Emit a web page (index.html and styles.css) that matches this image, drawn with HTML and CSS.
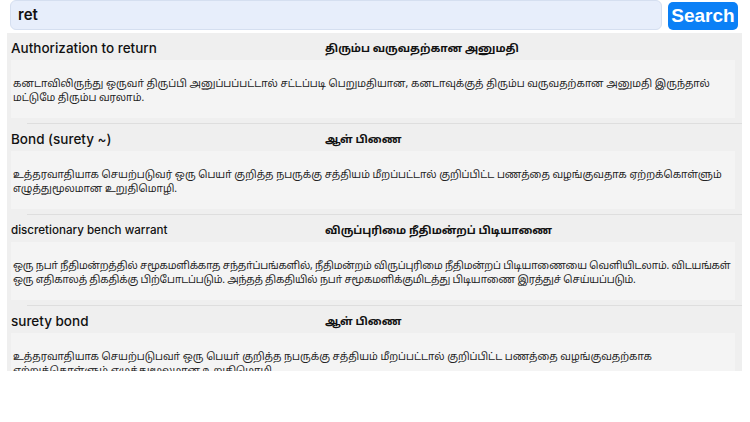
FILE: index.html
```html
<!DOCTYPE html>
<html lang="ta">
<head>
<meta charset="utf-8">
<title>Legal Glossary</title>
<link rel="stylesheet" href="styles.css">
</head>
<body>
<div class="topbar">
  <div class="search-input">ret</div>
  <button class="search-btn">Search</button>
</div>
<div class="list">
  <div class="item">
    <div class="head">
      <div class="term">Authorization to return</div>
      <div class="ta-term">திரும்ப வருவதற்கான அனுமதி</div>
    </div>
    <div class="desc">கனடாவிலிருந்து ஒருவா் திருப்பி அனுப்பப்பட்டால் சட்டப்படி பெறுமதியான, கனடாவுக்குத் திரும்ப வருவதற்கான அனுமதி இருந்தால்<br>மட்டுமே திரும்ப வரலாம்.</div>
    <div class="sep"></div>
  </div>
  <div class="item">
    <div class="head">
      <div class="term">Bond (surety ~)</div>
      <div class="ta-term">ஆள் பிணை</div>
    </div>
    <div class="desc">உத்தரவாதியாக செயற்படுவர் ஒரு பெயா் குறித்த நபருக்கு சத்தியம்  மீறப்பட்டால் குறிப்பிட்ட பணத்தை வழங்குவதாக  ஏற்றக்கொள்ளும்<br>எழுத்துமூலமான  உறுதிமொழி.</div>
    <div class="sep"></div>
  </div>
  <div class="item">
    <div class="head">
      <div class="term small">discretionary bench warrant</div>
      <div class="ta-term">விருப்புரிமை நீதிமன்றப் பிடியாணை</div>
    </div>
    <div class="desc tight">ஒரு நபா் நீதிமன்றத்தில் சமூகமளிக்காத சந்தா்ப்பங்களில், நீதிமன்றம் விருப்புரிமை நீதிமன்றப் பிடியாணையை வெளியிடலாம். விடயங்கள்<br>ஒரு எதிகாலத் திகதிக்கு  பிற்போடப்படும். அந்தத் திகதியில் நபா் சமூகமளிக்குமிடத்து பிடியாணை இரத்துச் செய்யப்படும்.</div>
    <div class="sep"></div>
  </div>
  <div class="item">
    <div class="head">
      <div class="term">surety bond</div>
      <div class="ta-term">ஆள் பிணை</div>
    </div>
    <div class="desc">உத்தரவாதியாக செயற்படுபவா் ஒரு பெயா் குறித்த நபருக்கு சத்தியம் மீறப்பட்டால் குறிப்பிட்ட பணத்தை வழங்குவதற்காக<br>ஏற்றுக்கொள்ளும்  எழுத்துமூலமான உறுதிமொழி.</div>
    <div class="sep"></div>
  </div>
</div>
</body>
</html>
```

FILE: styles.css
```css
html, body {
  margin: 0;
  padding: 0;
  background: #ffffff;
}
body {
  font-family: "Noto Sans", "Noto Sans Tamil", sans-serif;
  color: #111;
  width: 750px;
  height: 422px;
  overflow: hidden;
}
.topbar {
  display: flex;
  align-items: flex-start;
  gap: 6px;
  padding-left: 10px;
  height: 32px;
}
.search-input {
  box-sizing: border-box;
  width: 652px;
  height: 30px;
  background: #e7eefb;
  border: 1px solid #d5dff0;
  border-radius: 6px;
  font-family: "Inter", "Liberation Sans", sans-serif;
  font-weight: 600;
  font-size: 15px;
  line-height: 28px;
  padding-left: 7px;
  color: #111;
}
.search-btn {
  margin-top: 2px;
  width: 70px;
  height: 28px;
  border: none;
  border-radius: 5px;
  background: #0b80f6;
  color: #fff;
  font-family: "Liberation Sans", "Inter", sans-serif;
  font-weight: 700;
  font-size: 19px;
  padding: 0;
}
.list {
  margin-top: 1px;
  margin-left: 7px;
  width: 735px;
  height: 338px;
  overflow: hidden;
  background: #efefef;
}
.head {
  box-sizing: border-box;
  display: grid;
  grid-template-columns: 314px 1fr;
  align-items: center;
  height: 27px;
  padding: 2px 0 0 4px;
}
.term {
  font-family: "Inter", "Liberation Sans", sans-serif;
  font-weight: 500;
  font-size: 13.5px;
  color: #111;
}
.term.small {
  font-size: 11.6px;
}
.ta-term {
  font-weight: 700;
  font-size: 10.8px;
  color: #111;
}
.desc {
  margin: 0 7px 0 4px;
  padding: 16px 0 14px 2px;
  background: #f4f4f4;
  font-size: 10.2px;
  line-height: 14px;
  height: 28px;
  overflow: hidden;
  white-space: nowrap;
  color: #222;
}
.desc.tight {
  letter-spacing: -0.2px;
}
.sep {
  margin-top: 5px;
  margin-left: 20px;
  height: 1px;
  background: #dedede;
}
```
